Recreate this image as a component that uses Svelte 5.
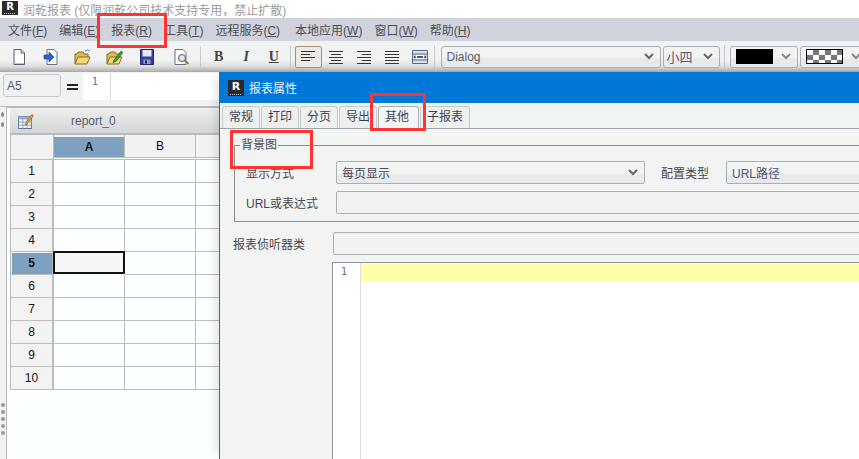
<script>
  const menus = [
    ['文件(', 'F', ')'], ['编辑(', 'E', ')'], ['报表(', 'R', ')'], ['工具(', 'T', ')'],
    ['远程服务(', 'C', ')'], ['本地应用(', 'W', ')'], ['窗口(', 'W', ')'], ['帮助(', 'H', ')']
  ];
  const tabs = ['常规', '打印', '分页', '导出', '其他', '子报表'];
  const rows = [1, 2, 3, 4, 5, 6, 7, 8, 9, 10];
</script>

<div class="app">
  <div class="titlebar">
    <span class="logo"><b>R</b><i></i></span>
    <span>润乾报表 (仅限润乾公司技术支持专用，禁止扩散)</span>
  </div>

  <div class="menubar">
    {#each menus as m}
      <span>{m[0]}<u>{m[1]}</u>{m[2]}</span>
    {/each}
  </div>

  <div class="toolbar">
    <button class="tool" style="margin-left:3px">
      <svg width="18" height="18" viewBox="0 0 18 18"><path d="M4 1.500h7l3.500 3.500v11.500H4z" fill="#fff" stroke="#56606e"/><path d="M11 1.500V5h3.500" fill="#dfe5ee" stroke="#56606e"/><path d="M5 15.500h9" stroke="#b8c6dc"/></svg>
    </button>
    <button class="tool">
      <svg width="18" height="18" viewBox="0 0 18 18"><path d="M5 1.500h7l3 3v12H5z" fill="#f6f8fb" stroke="#6a7484"/><path d="M2 7h5V4l5 5-5 5v-3H2z" fill="#2c62c8" stroke="#1a3f8c" stroke-width=".6"/></svg>
    </button>
    <button class="tool">
      <svg width="20" height="18" viewBox="0 0 20 18"><path d="M2 16V6h2l1-2h5l1 2h4v3" fill="#e0b850" stroke="#8a6d24"/><path d="M2 16l3-7h12l-3 7z" fill="#f3d877" stroke="#8a6d24"/><path d="M12 3q3-2 5 0" fill="none" stroke="#5b7db5"/></svg>
    </button>
    <button class="tool">
      <svg width="20" height="18" viewBox="0 0 20 18"><path d="M2 16V6h2l1-2h5l1 2h4v3" fill="#e0b850" stroke="#8a6d24"/><path d="M2 16l3-7h12l-3 7z" fill="#f3d877" stroke="#8a6d24"/><path d="M9 12l7-9 2 1.500-7 9-3 1z" fill="#3c9a3c" stroke="#215f21" stroke-width=".6"/></svg>
    </button>
    <button class="tool save">
      <svg width="14" height="16" viewBox="0 0 14 16"><path d="M.5.500h13v15H.5z" fill="#3a3fa8" stroke="#24286e"/><path d="M2.500 1h9v6.500h-9z" fill="#e8e8f2"/><path d="M3.500 10.500h7V15h-7z" fill="#9a9ab0"/><path d="M5 11.500h2v3H5z" fill="#24286e"/></svg>
    </button>
    <button class="tool preview">
      <svg width="20" height="18" viewBox="0 0 20 18"><path d="M3 1.500h8l3 3v12H3z" fill="#fff" stroke="#6a7484"/><circle cx="10" cy="10" r="3.500" fill="#dce8f4" stroke="#556"/><path d="M12.500 12.500l4 3.500" stroke="#b8772c" stroke-width="2"/></svg>
    </button>
    <span class="sep sep1"></span>
    <button class="tool txt">B</button>
    <button class="tool txt italic">I</button>
    <button class="tool txt under">U</button>
    <span class="sep sep2"></span>
    <button class="tool align active">
      <svg width="16" height="14" viewBox="0 0 16 14"><path d="M1 1.500h14M1 4.500h9M1 7.500h14M1 10.500h9" stroke="#333" fill="none"/></svg>
    </button>
    <button class="tool align">
      <svg width="16" height="14" viewBox="0 0 16 14"><path d="M1 1.500h14M3 4.500h10M1 7.500h14M3 10.500h10M1 13.500h14" stroke="#333" fill="none"/></svg>
    </button>
    <button class="tool align">
      <svg width="16" height="14" viewBox="0 0 16 14"><path d="M1 1.500h14M6 4.500h9M1 7.500h14M6 10.500h9M1 13.500h14" stroke="#333" fill="none"/></svg>
    </button>
    <button class="tool align">
      <svg width="16" height="14" viewBox="0 0 16 14"><path d="M1 1.500h14M1 4.500h14M1 7.500h14M1 10.500h14M1 13.500h14" stroke="#333" fill="none"/></svg>
    </button>
    <button class="tool align">
      <svg width="16" height="16" viewBox="0 0 16 16"><path d="M.5 1.500h15v13H.5z" fill="#d6e2f0" stroke="#546a86"/><path d="M.5 5h15M.5 11h15" stroke="#546a86"/><path d="M4 6h8v4H4z" fill="#fff"/><path d="M5 8h6" stroke="#223" stroke-width="1.500"/><path d="M1.500 8l2-1.500v3zM14.500 8l-2-1.500v3z" fill="#223"/></svg>
    </button>
    <span class="sep sep3"></span>
    <div class="combo font"><span>Dialog</span><svg class="chev" width="10" height="7" viewBox="0 0 10 7"><path d="M1 1l4 4 4-4" fill="none" stroke="#666" stroke-width="2"/></svg></div>
    <div class="combo size"><span>小四</span><svg class="chev" width="10" height="7" viewBox="0 0 10 7"><path d="M1 1l4 4 4-4" fill="none" stroke="#666" stroke-width="2"/></svg></div>
    <span class="sep sep4"></span>
    <div class="combo color"><i class="swatch"></i><svg class="chev" width="10" height="7" viewBox="0 0 10 7"><path d="M1 1l4 4 4-4" fill="none" stroke="#888" stroke-width="2"/></svg></div>
    <div class="combo color pat"><i class="swatch checker"></i><svg class="chev" width="10" height="7" viewBox="0 0 10 7"><path d="M1 1l4 4 4-4" fill="none" stroke="#888" stroke-width="2"/></svg></div>
  </div>

  <div class="formula">
    <div class="cellref">A5</div>
    <div class="equals"></div>
    <div class="expr"><span class="expr-gutter">1</span></div>
  </div>

  <div class="workspace">
    <div class="handle-strip">
      <div class="top-dots"><i></i><i></i></div>
      <div class="dots"><i></i><i></i><i></i><i></i><i></i></div>
    </div>
    <div class="sheet">
      <div class="sheet-head">
        <svg width="16" height="16" viewBox="0 0 15 15"><path d="M.5 3.500h12v11H.5z" fill="#fff" stroke="#5d7391"/><path d="M.5 3.500h12v2.500H.5z" fill="#8fb0d8"/><path d="M.5 8.500h12M.5 11.500h12M4.500 3.500v11M8.500 3.500v11" stroke="#8ca3bf" fill="none"/><path d="M7 9.500l6-8 1.500 1-6 8-2 .8z" fill="#e3a72e" stroke="#7f5b12" stroke-width=".6"/></svg>
        <span>report_0</span>
      </div>
      <div class="grid">
        <div class="corner"></div>
        <div class="colhead sel">A</div>
        <div class="colhead">B</div>
        <div class="colhead"></div>
        {#each rows as r}
          <div class="rowhead" class:sel={r === 5}>{r}</div>
          <div class="cell" class:current={r === 5}></div>
          <div class="cell"></div>
          <div class="cell"></div>
        {/each}
      </div>
    </div>
  </div>

  <div class="dialog">
    <div class="dlg-title">
      <span class="logo dlg-logo"><b>R</b><i></i></span>
      <span>报表属性</span>
    </div>
    <div class="tabs">
      {#each tabs as t}
        <span class="tab" class:active={t === '其他'}>{t}</span>
      {/each}
    </div>
    <div class="panel">
      <fieldset>
        <legend>背景图</legend>
        <div class="fs-row first">
          <label class="l1" for="show">显示方式</label>
          <div class="box select" id="show">
            <span>每页显示</span>
            <svg width="10" height="7" viewBox="0 0 10 7"><path d="M1 1l4 4 4-4" fill="none" stroke="#666" stroke-width="2"/></svg>
          </div>
          <label class="l2" for="kind">配置类型</label>
          <div class="box select grow" id="kind"><span class="blue">URL路径</span></div>
        </div>
        <div class="fs-row">
          <label class="l1" for="url">URL或表达式</label>
          <div class="box grow" id="url"></div>
        </div>
      </fieldset>
      <div class="listener">
        <label for="lis">报表侦听器类</label>
        <div class="box grow" id="lis"></div>
      </div>
      <div class="editor">
        <div class="ed-gutter">1</div>
        <div class="ed-body"><div class="ed-line"></div></div>
      </div>
    </div>
  </div>

  <i class="mark m1"></i>
  <i class="mark m2"></i>
  <i class="mark m3"></i>
</div>

<style>
  :global(body) {
    margin: 0;
    overflow: hidden;
    background: #fff;
  }

  .app {
    position: relative;
    width: 859px;
    height: 459px;
    overflow: hidden;
    display: flex;
    flex-direction: column;
    font-family: "Liberation Sans", "Noto Sans CJK SC", sans-serif;
    font-size: 12px;
    color: #44474f;
  }

  .titlebar {
    height: 18px;
    display: flex;
    align-items: center;
    gap: 5px;
    padding-left: 2px;
    background: #fff;
    color: #9a9a9a;
  }

  .logo {
    position: relative;
    width: 16px;
    height: 14px;
    margin-top: -3px;
    background: #2a2a2e;
    display: flex;
    justify-content: center;
    color: #fff;
    font-size: 10px;
    line-height: 12px;
  }

  .logo b {
    font-family: "DejaVu Sans", sans-serif;
    font-weight: 900;
  }

  .logo i {
    position: absolute;
    left: 2px;
    right: 2px;
    bottom: 1px;
    height: 1px;
    background: repeating-linear-gradient(90deg, #ccc 0 1px, transparent 1px 2px);
  }

  .menubar {
    height: 23px;
    display: flex;
    align-items: center;
    gap: 12px;
    padding-left: 8px;
    background: #d0d3dc;
    color: #4a4d57;
  }

  .menubar span {
    white-space: nowrap;
  }

  .menubar span:nth-child(6) {
    margin-left: 3px;
  }

  .toolbar {
    height: 31px;
    box-sizing: border-box;
    display: flex;
    align-items: center;
    background: linear-gradient(#f1f2f2 0 62%, #dcdddc 82%, #a9aaa8 100%);
  }

  .tool {
    width: 32px;
    height: 22px;
    flex: none;
    padding: 0;
    display: flex;
    align-items: center;
    justify-content: center;
    background: none;
    border: 1px solid transparent;
    border-radius: 2px;
    font-family: "Liberation Serif", serif;
    color: #444;
  }

  .save {
    margin-right: 2px;
  }

  .preview {
    width: 33px;
  }

  .txt {
    width: 27.500px;
    font-size: 14px;
    font-weight: 700;
  }

  .italic {
    font-style: italic;
  }

  .under {
    text-decoration: underline;
  }

  .align {
    width: 28px;
  }

  .active {
    width: 27px;
    background: #eceae6;
    border-color: #a8906f;
  }

  .sep {
    width: 1px;
    height: 22px;
    flex: none;
    background: #c6c8c8;
  }

  .sep1 {
    margin: 0 4px 0 2px;
  }

  .sep2 {
    margin: 0 4px 0 2px;
  }

  .sep3 {
    margin: 0 6px 0 0;
  }

  .sep4 {
    margin: 0 5px 0 4px;
  }

  .combo {
    height: 22px;
    box-sizing: border-box;
    flex: none;
    display: flex;
    align-items: center;
    justify-content: space-between;
    padding: 0 6px 0 5px;
    border: 1px solid #aab0b8;
    border-radius: 3px;
    background: linear-gradient(#f2f3f3 50%, #e8e9eb 60%);
    color: #555c6c;
  }

  .font {
    width: 220px;
  }

  .size {
    width: 57px;
    margin-left: 2px;
    padding-left: 3px;
    font-size: 13px;
  }

  .color {
    width: 68px;
  }

  .pat {
    margin-left: 2px;
  }

  .swatch {
    width: 37px;
    height: 15px;
    background: #000;
  }

  .checker {
    box-sizing: border-box;
    border: 1px solid #000;
    background: repeating-conic-gradient(#777 0 25%, #fff 0 50%) 0 0 / 12px 10px;
  }

  .formula {
    height: 34px;
    box-sizing: border-box;
    display: flex;
    align-items: flex-start;
    padding: 2px 0 0 3px;
    background: #f1f3f3;
  }

  .cellref {
    width: 58px;
    height: 23px;
    box-sizing: border-box;
    padding-left: 3px;
    line-height: 22px;
    border: 1px solid #c6cacc;
    border-radius: 3px;
    background: #f0f2f2;
    color: #555a66;
  }

  .equals {
    width: 11px;
    height: 6px;
    margin: 10px 5px 0 6px;
    border-top: 2px solid #222;
    border-bottom: 2px solid #222;
    box-sizing: border-box;
  }

  .expr {
    flex: 1;
    height: 27px;
    margin-top: -1px;
    background: #fff;
  }

  .expr-gutter {
    display: block;
    width: 28px;
    height: 100%;
    box-sizing: border-box;
    padding: 3px 0 0 9px;
    border-right: 1px solid #d8d8d8;
    font-size: 10px;
    font-family: "DejaVu Sans Mono", monospace;
    color: #8a5f78;
  }

  .workspace {
    flex: 1;
    display: flex;
    min-height: 0;
    background: #f1f3f3;
    border-top: 1px solid #bbb;
    box-sizing: border-box;
  }

  .handle-strip {
    width: 6px;
    height: 323px;
    flex: none;
    padding-top: 5px;
    display: flex;
    flex-direction: column;
    justify-content: space-between;
  }

  .top-dots,
  .dots {
    display: flex;
    flex-direction: column;
    gap: 3px;
    padding-left: 1px;
  }

  .top-dots {
    gap: 5px;
  }

  .top-dots i,
  .dots i {
    width: 4px;
    height: 4px;
    border-radius: 50%;
    background: #999;
  }

  .top-dots i {
    background: #888;
    height: 5px;
    width: 3px;
  }

  .sheet {
    flex: 1;
    border: 1px solid #b4b8b8;
    border-bottom: none;
    background: #fbfffe;
    padding-left: 3px;
    min-width: 0;
  }

  .sheet-head {
    height: 27px;
    box-sizing: border-box;
    display: flex;
    align-items: center;
    gap: 37px;
    padding-left: 8px;
    background: linear-gradient(#eeeeee, #d4d5d8);
    border-bottom: 2px solid #b8bbbd;
    color: #5a5d6e;
    font-size: 12px;
  }

  .grid {
    display: grid;
    grid-template-columns: 43px 71px 71px 71px;
    grid-template-rows: 25px;
    grid-auto-rows: 23px;
    border-left: 1px solid #b8bbbd;
    width: max-content;
  }

  .corner,
  .colhead,
  .rowhead,
  .cell {
    box-sizing: border-box;
    display: flex;
    align-items: center;
    justify-content: center;
    border-right: 1px solid #bbbcbc;
    border-bottom: 1px solid #bbbcbc;
  }

  .corner {
    height: 25px;
    background: #f2f2f2;
  }

  .colhead {
    height: 23px;
    background: #f2f2f2;
    color: #111;
    font-size: 12px;
    box-shadow: 0 1px 0 #fbfffe, 0 2px 0 #bbbcbc;
  }

  .colhead.sel {
    background: #7fa1c1;
    font-weight: 700;
    padding-top: 2px;
    box-shadow: inset 0 2px 0 #f2f2f2, 0 1px 0 #fbfffe, 0 2px 0 #bbbcbc;
  }

  .rowhead {
    background: #f3f3f3;
    color: #111;
    border-right-width: 2px;
  }

  .rowhead.sel {
    background: #7fa1c1;
    font-weight: 700;
    box-shadow: inset 1px 1px 0 #f2f2f2;
  }

  .cell {
    background: #fbfffe;
  }

  .cell.current {
    background: #f6f6f6;
    border: 2px solid #111;
    border-radius: 1px;
    margin: -1px 0 1px -1px;
  }

  /* the dialog floats over the sheet as its own window, its right edge runs off the page */
  .dialog {
    position: absolute;
    left: 219px;
    top: 72px;
    width: 680px;
    bottom: 0;
    display: flex;
    flex-direction: column;
    background: #f2f4f4;
    border-left: 1px solid #0078d7;
    box-shadow: -8px 0 10px -6px rgba(0, 0, 0, 0.14);
  }

  .dlg-title {
    height: 31px;
    flex: none;
    display: flex;
    align-items: center;
    gap: 5px;
    padding-left: 8px;
    background: #0078d7;
    color: #e8f2fb;
    font-size: 12px;
  }

  .dlg-logo {
    height: 16px;
    margin-top: 0;
    font-size: 11px;
    line-height: 13px;
  }

  .tabs {
    display: flex;
    gap: 1px;
    height: 25px;
    flex: none;
    box-sizing: border-box;
    padding: 3px 0 0 2px;
  }

  .tab {
    height: 21px;
    padding: 0 6px;
    line-height: 21px;
    white-space: nowrap;
    border: 1px solid #c6cccc;
    border-bottom: none;
    border-radius: 3px 3px 0 0;
    background: #eef0f0;
    color: #3f4350;
  }

  .tab.active {
    background: #f4f6f6;
    border-color: #a9b0b3;
  }

  .panel {
    flex: 1;
    border-top: 1px solid #9aa3a8;
    padding-left: 13px;
    min-height: 0;
    display: flex;
    flex-direction: column;
  }

  fieldset {
    margin: 9px 0 0 1px;
    padding: 0;
    border: 1px solid #8a8e90;
    border-right: none;
    height: 84px;
    box-sizing: border-box;
  }

  legend {
    padding: 0 1px;
    margin-left: 5px;
    font-size: 12px;
    line-height: 14px;
    color: #44474f;
  }

  .fs-row {
    display: flex;
    align-items: center;
    padding-left: 11px;
    margin-top: 7px;
  }

  .fs-row.first {
    margin-top: 9px;
  }

  .l1 {
    width: 90px;
    flex: none;
  }

  .l2 {
    width: 65px;
    flex: none;
    margin-left: 16px;
  }

  .box {
    height: 23px;
    box-sizing: border-box;
    display: flex;
    align-items: center;
    justify-content: space-between;
    padding: 0 6px 0 5px;
    border: 1px solid #a8b0b4;
    border-radius: 2px;
    background: #f0f2f2;
  }

  .select {
    width: 309px;
    flex: none;
    background: linear-gradient(#f2f3f3 50%, #e8e9ec 65%);
  }

  .select.grow,
  .grow {
    flex: 1;
    width: auto;
    min-width: 0;
  }

  .blue {
    color: #50597a;
  }

  .listener {
    display: flex;
    align-items: center;
    margin-top: 10px;
  }

  .listener label {
    width: 100px;
    flex: none;
  }

  .editor {
    flex: 1;
    display: flex;
    margin: 7px 0 0 99px;
    background: #fff;
    border-left: 1px solid #8f989e;
    border-top: 1px solid #8f989e;
  }

  .ed-gutter {
    width: 28px;
    flex: none;
    box-sizing: border-box;
    padding: 2px 0 0 8px;
    border-right: 1px solid #ddd;
    font-family: "DejaVu Sans Mono", monospace;
    font-size: 10px;
    line-height: 14px;
    color: #8a5f78;
  }

  .ed-body {
    flex: 1;
  }

  .ed-line {
    height: 18px;
    background: #ffffaa;
  }

  /* red annotation boxes drawn on top of the screenshot */
  .mark {
    position: absolute;
    box-sizing: border-box;
    border: 3px solid #ff3333;
    pointer-events: none;
  }

  .m1 {
    left: 97px;
    top: 13px;
    width: 70px;
    height: 35px;
  }

  .m2 {
    left: 370px;
    top: 93px;
    width: 56px;
    height: 38px;
  }

  .m3 {
    left: 230px;
    top: 130px;
    width: 83px;
    height: 39px;
  }
</style>
